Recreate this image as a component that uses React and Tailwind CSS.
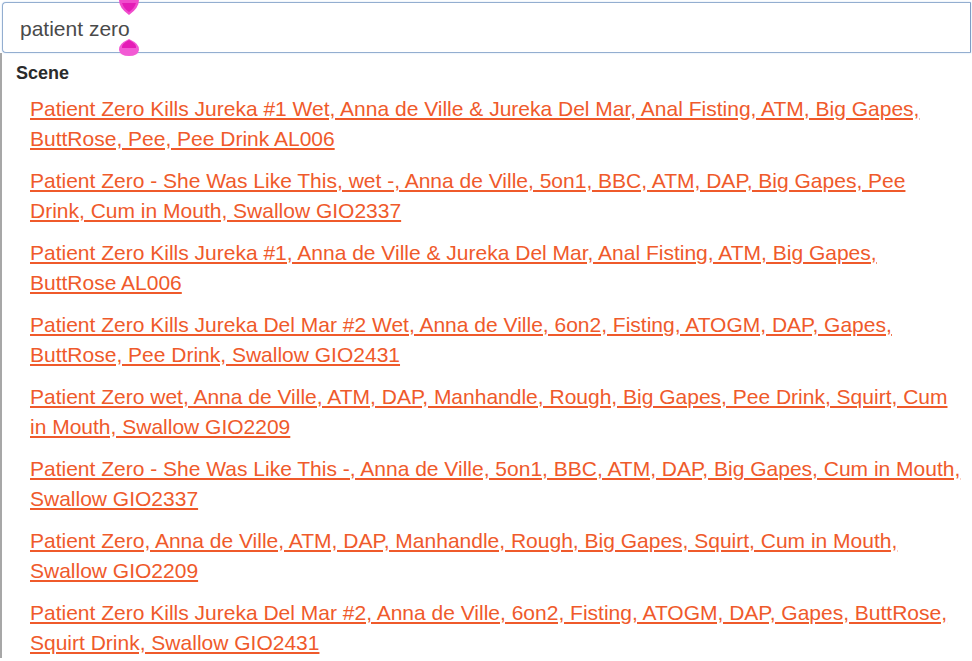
import { useState } from "react";

const scenes = [
  "Patient Zero Kills Jureka #1 Wet, Anna de Ville & Jureka Del Mar, Anal Fisting, ATM, Big Gapes, ButtRose, Pee, Pee Drink AL006",
  "Patient Zero - She Was Like This, wet -, Anna de Ville, 5on1, BBC, ATM, DAP, Big Gapes, Pee Drink, Cum in Mouth, Swallow GIO2337",
  "Patient Zero Kills Jureka #1, Anna de Ville & Jureka Del Mar, Anal Fisting, ATM, Big Gapes, ButtRose AL006",
  "Patient Zero Kills Jureka Del Mar #2 Wet, Anna de Ville, 6on2, Fisting, ATOGM, DAP, Gapes, ButtRose, Pee Drink, Swallow GIO2431",
  "Patient Zero wet, Anna de Ville, ATM, DAP, Manhandle, Rough, Big Gapes, Pee Drink, Squirt, Cum in Mouth, Swallow GIO2209",
  "Patient Zero - She Was Like This -, Anna de Ville, 5on1, BBC, ATM, DAP, Big Gapes, Cum in Mouth, Swallow GIO2337",
  "Patient Zero, Anna de Ville, ATM, DAP, Manhandle, Rough, Big Gapes, Squirt, Cum in Mouth, Swallow GIO2209",
  "Patient Zero Kills Jureka Del Mar #2, Anna de Ville, 6on2, Fisting, ATOGM, DAP, Gapes, ButtRose, Squirt Drink, Swallow GIO2431",
];

export default function App() {
  const [query, setQuery] = useState("patient zero");

  return (
    <div className="h-[661px] overflow-hidden bg-white font-['Liberation_Sans',Arial,sans-serif]">
      {/* search box */}
      <div className="relative pl-[2px] pr-px pt-[2px]">
        <input
          type="text"
          value={query}
          onChange={(e) => setQuery(e.target.value)}
          className="block h-[51px] w-full rounded-l-[4px] border border-[#93aed0] border-r-[#7f9cc4] bg-white pl-[17px] pt-[2px] text-[21px] text-[#4a4a4a] shadow-[0_0_2px_#c9dcf2] outline-none"
        />
        {/* selection handles */}
        <svg className="absolute left-[118px] top-0" width="22" height="16" viewBox="0 0 22 16">
          <path d="M1 0 Q1 8 11 15 Q21 8 21 0 Z" fill="#f04ccc" />
          <path d="M4 3 Q6 9 11 12 Q16 9 18 3 Z" fill="#e41cb6" />
        </svg>
        <svg className="absolute left-[118px] top-[39px]" width="22" height="18" viewBox="0 0 22 18">
          <path d="M11 0 Q0 5 1 11 Q2 17 11 17 Q20 17 21 11 Q22 5 11 0 Z" fill="#f25ad4" />
          <path d="M11 1 Q3 5 4 9 L18 9 Q19 5 11 1 Z" fill="#e41cb6" />
        </svg>
      </div>

      {/* dropdown */}
      <div className="flex">
        <div className="w-[2px] bg-[#a7a7a7]" />
        <div className="flex-1 pr-[6px] pt-[9px]">
          <div className="pl-[14px] text-[18px] font-bold leading-[22px] text-[#2b2b2b]">Scene</div>
          <ul className="mt-[10px] flex flex-col gap-[12px] pl-[28px]">
            {scenes.map((s, i) => (
              <li key={i}>
                <a href="#" className="text-[21px] leading-[30px] text-[#ef5a2b] underline decoration-[#ef5a2b]">
                  {s}
                </a>
              </li>
            ))}
          </ul>
        </div>
      </div>
    </div>
  );
}
